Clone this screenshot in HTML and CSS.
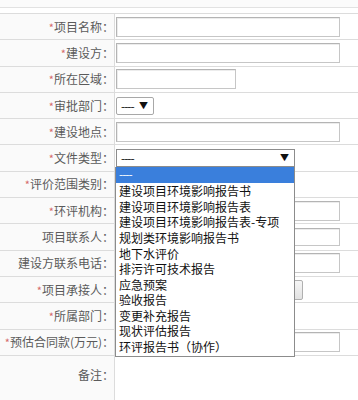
FILE: index.html
```html
<!DOCTYPE html>
<html lang="zh">
<head>
<meta charset="utf-8">
<title>项目登记</title>
<link rel="stylesheet" href="styles.css">
</head>
<body>
<div class="top"></div>
<div class="form">
  <div class="row">
    <div class="lbl"><span class="req">*</span>项目名称：</div>
    <div class="cell"><span class="inp w-full"></span></div>
  </div>
  <div class="row">
    <div class="lbl"><span class="req">*</span>建设方：</div>
    <div class="cell"><span class="inp w-full"></span></div>
  </div>
  <div class="row">
    <div class="lbl"><span class="req">*</span>所在区域：</div>
    <div class="cell"><span class="inp w-mid"></span></div>
  </div>
  <div class="row">
    <div class="lbl"><span class="req">*</span>审批部门：</div>
    <div class="cell"><span class="sel sel-sm"><span class="sel-text">----</span><span class="arrow">▼</span></span></div>
  </div>
  <div class="row">
    <div class="lbl"><span class="req">*</span>建设地点：</div>
    <div class="cell"><span class="inp w-full"></span></div>
  </div>
  <div class="row">
    <div class="lbl"><span class="req">*</span>文件类型：</div>
    <div class="cell">
      <div class="selwrap">
        <span class="sel sel-lg"><span class="sel-text">----</span><span class="arrow">▼</span></span>
        <ul class="dropdown">
          <li class="opt active">----</li>
          <li class="opt">建设项目环境影响报告书</li>
          <li class="opt">建设项目环境影响报告表</li>
          <li class="opt">建设项目环境影响报告表-专项</li>
          <li class="opt">规划类环境影响报告书</li>
          <li class="opt">地下水评价</li>
          <li class="opt">排污许可技术报告</li>
          <li class="opt">应急预案</li>
          <li class="opt">验收报告</li>
          <li class="opt">变更补充报告</li>
          <li class="opt">现状评估报告</li>
          <li class="opt">环评报告书（协作）</li>
        </ul>
      </div>
    </div>
  </div>
  <div class="row">
    <div class="lbl"><span class="req">*</span>评价范围类别：</div>
    <div class="cell"></div>
  </div>
  <div class="row">
    <div class="lbl"><span class="req">*</span>环评机构：</div>
    <div class="cell"><span class="inp w-full"></span></div>
  </div>
  <div class="row">
    <div class="lbl">项目联系人：</div>
    <div class="cell"><span class="inp w-full inp-short"></span></div>
  </div>
  <div class="row">
    <div class="lbl">建设方联系电话：</div>
    <div class="cell"><span class="inp w-full"></span></div>
  </div>
  <div class="row">
    <div class="lbl"><span class="req">*</span>项目承接人：</div>
    <div class="cell"><span class="inp w-pick"></span><span class="btn"></span></div>
  </div>
  <div class="row">
    <div class="lbl"><span class="req">*</span>所属部门：</div>
    <div class="cell"></div>
  </div>
  <div class="row">
    <div class="lbl"><span class="req">*</span>预估合同款(万元)：</div>
    <div class="cell"><span class="inp w-full"></span></div>
  </div>
  <div class="row row-tall">
    <div class="lbl lbl-top">备注：</div>
    <div class="cell"></div>
  </div>
</div>
</body>
</html>
```

FILE: styles.css
```css
* {
  box-sizing: border-box;
}

html, body {
  margin: 0;
  padding: 0;
  background: #ffffff;
}

body {
  font-family: "Noto Sans CJK SC", "Noto Sans", sans-serif;
  font-size: 12px;
  color: #555;
  width: 358px;
  height: 400px;
  overflow: hidden;
}

.top {
  height: 8px;
  border-bottom: 1px solid #e2e2e2;
  background: #fbfbfb;
}

.form {
  margin-top: 5px;
  border-top: 1px solid #dcdcdc;
}

.row {
  display: grid;
  grid-template-columns: 115px 1fr;
  height: 26.3px;
  border-bottom: 1px solid #dcdcdc;
}

.row-tall {
  height: 44px;
  border-bottom: none;
}

.lbl {
  display: flex;
  align-items: center;
  justify-content: flex-end;
  padding-right: 0;
  border-right: 1px solid #dcdcdc;
  background: #fafafa;
  color: #5a5a5a;
  white-space: nowrap;
  line-height: 16px;
}

.lbl-top {
  align-items: flex-start;
  padding-top: 11px;
}

.req {
  color: #d46a6a;
  font-size: 11px;
}

.cell {
  display: flex;
  align-items: center;
  padding-left: 1px;
}

.inp {
  display: block;
  height: 20px;
  border: 1px solid #c6c6c6;
  border-top-color: #b4b4b4;
  border-left-color: #b4b4b4;
  box-shadow: inset 1px 1px 0 #ececec;
  background: #fff;
}

.w-full {
  width: 224px;
}

.inp-short {
  height: 18px;
}

.w-mid {
  width: 120px;
}

.w-pick {
  width: 172px;
}

.btn {
  display: block;
  width: 12px;
  height: 20px;
  margin-left: 3px;
  border: 1px solid #b0b0b0;
  border-radius: 2px;
  background: linear-gradient(#f6f6f6, #e2e2e2);
}

.sel {
  display: flex;
  align-items: center;
  justify-content: space-between;
  height: 18px;
  border: 1px solid #a8a8a8;
  border-radius: 2px;
  background: #fff;
  color: #111;
  padding: 0 5px 0 4px;
  font-size: 12px;
  line-height: 16px;
}

.sel-sm {
  width: 38px;
}

.sel-lg {
  width: 179px;
  border-color: #8c8c8c;
  border-radius: 0;
}

.sel-text {
  letter-spacing: -1px;
}

.arrow {
  font-size: 9px;
  color: #111;
}

.selwrap {
  position: relative;
}

.dropdown {
  position: absolute;
  top: 18px;
  left: -1px;
  width: 180px;
  margin: 0;
  padding: 0 0 1px 0;
  list-style: none;
  background: #fff;
  border: 1px solid #8c8c8c;
  border-top: none;
  z-index: 5;
}

.opt {
  height: 15.6px;
  line-height: 15.6px;
  padding-left: 3px;
  color: #111;
  font-size: 12px;
  white-space: nowrap;
}

.opt.active {
  height: 16px;
  line-height: 14px;
  background: #3a7fdc;
  color: #fff;
  letter-spacing: -1px;
}
```
